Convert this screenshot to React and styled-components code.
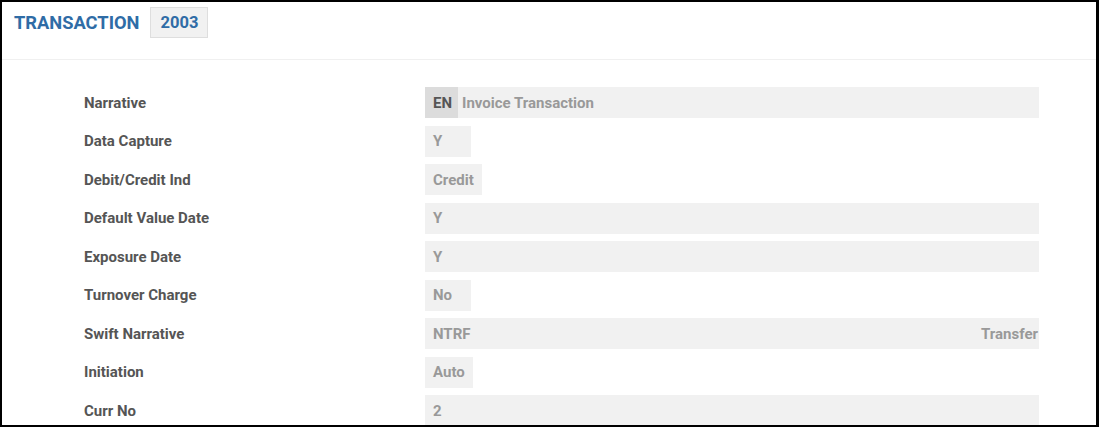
import styled, { createGlobalStyle } from "styled-components";

const GlobalStyle = createGlobalStyle`
  html, body {
    margin: 0;
    padding: 0;
    background: #fff;
  }
  body {
    font-family: Roboto, "Liberation Sans", Arial, sans-serif;
  }
`;

const rows = [
  { label: "Narrative", value: "Invoice Transaction", lang: "EN", wide: true },
  { label: "Data Capture", value: "Y" },
  { label: "Debit/Credit Ind", value: "Credit" },
  { label: "Default Value Date", value: "Y", wide: true },
  { label: "Exposure Date", value: "Y", wide: true },
  { label: "Turnover Charge", value: "No" },
  { label: "Swift Narrative", value: "NTRF", extra: "Transfer", wide: true },
  { label: "Initiation", value: "Auto" },
  { label: "Curr No", value: "2", wide: true },
];

const App = () => {
  return (
    <>
      <GlobalStyle />
      <Frame>
        <Header>
          <Title>TRANSACTION</Title>
          <Badge>2003</Badge>
        </Header>
        <Body>
          {rows.map((row) => (
            <Row key={row.label}>
              <Label>{row.label}</Label>
              <Field $wide={row.wide}>
                {row.lang && <Lang>{row.lang}</Lang>}
                <Value>{row.value}</Value>
                {row.extra && <Extra>{row.extra}</Extra>}
              </Field>
            </Row>
          ))}
        </Body>
      </Frame>
    </>
  );
};

const Frame = styled.div`
  width: 1099px;
  height: 427px;
  box-sizing: border-box;
  border: 2px solid #000;
  border-right-width: 3px;
  overflow: hidden;
  background: #fff;
`;

const Header = styled.div`
  height: 58px;
  box-sizing: border-box;
  display: flex;
  align-items: flex-start;
  padding: 5px 0 0 12px;
  gap: 11px;
  border-bottom: 1px solid #f0f0f0;
`;

const Title = styled.div`
  font-size: 18.3px;
  font-weight: 700;
  color: #2f6ca6;
  line-height: 31px;
`;

const Badge = styled.div`
  height: 31px;
  box-sizing: border-box;
  padding: 0 9px;
  background: #f1f1f1;
  border: 1px solid #dedede;
  font-size: 16.5px;
  font-weight: 700;
  color: #2f6ca6;
  line-height: 29px;
`;

const Body = styled.div`
  padding: 27px 0 0 82px;
  display: flex;
  flex-direction: column;
  gap: 7.5px;
`;

const Row = styled.div`
  display: grid;
  grid-template-columns: 341px 614px;
  align-items: center;
  height: 31px;
`;

const Label = styled.div`
  font-size: 15px;
  font-weight: 700;
  color: #555;
`;

const Field = styled.div`
  display: flex;
  align-items: center;
  height: 31px;
  box-sizing: border-box;
  background: #f1f1f1;
  justify-self: ${({ $wide }) => ($wide ? "stretch" : "start")};
  min-width: 46px;
  padding-right: ${({ $wide }) => ($wide ? "0" : "8px")};
  font-size: 15px;
  font-weight: 700;
  color: #999;
`;

const Lang = styled.div`
  align-self: stretch;
  display: flex;
  align-items: center;
  padding: 0 6px 0 8px;
  background: #dcdcdc;
  color: #555;
  margin-right: -4px;
`;

const Value = styled.div`
  padding-left: 8px;
`;

const Extra = styled.div`
  margin-left: auto;
  padding-right: 1px;
`;

export default App;
